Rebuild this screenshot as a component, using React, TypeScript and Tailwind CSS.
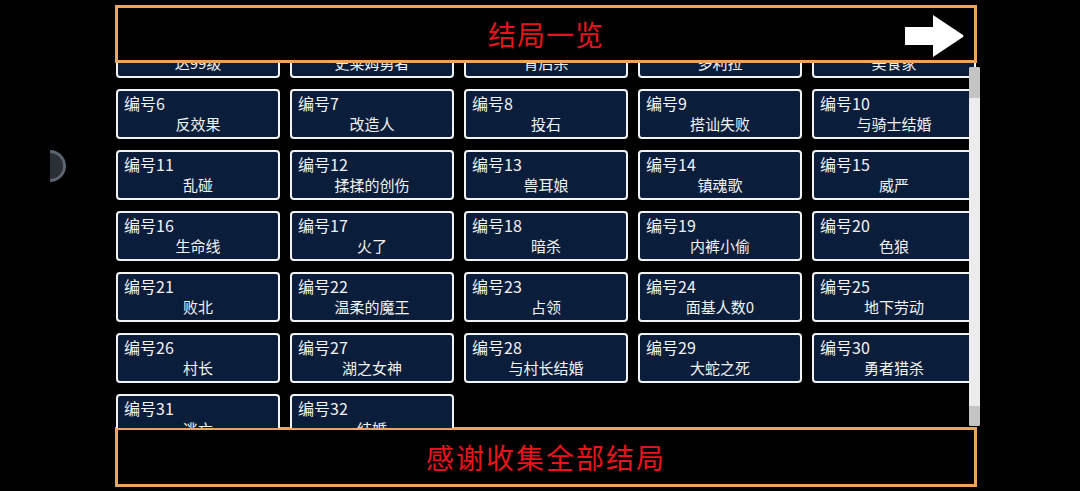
const endings: string[] = [
  "达99级",
  "史莱姆勇者",
  "背后杀",
  "多利拉",
  "美食家",
  "反效果",
  "改造人",
  "投石",
  "搭讪失败",
  "与骑士结婚",
  "乱碰",
  "揉揉的创伤",
  "兽耳娘",
  "镇魂歌",
  "威严",
  "生命线",
  "火了",
  "暗杀",
  "内裤小偷",
  "色狼",
  "败北",
  "温柔的魔王",
  "占领",
  "面基人数0",
  "地下劳动",
  "村长",
  "湖之女神",
  "与村长结婚",
  "大蛇之死",
  "勇者猎杀",
  "逃亡",
  "结婚",
];

const font = "font-['Noto_Sans_CJK_SC','Noto_Sans',sans-serif]";

function EndingCard({ no, title }: { no: number; title: string }) {
  return (
    <div className="h-[50px] w-[164px] rounded-[4px] border-2 border-[#f4f4f4] bg-[#0a1e3c] px-[6px] pt-px text-[#f2f2f2]">
      <div className="h-[22px] text-[16px] leading-[22px]">编号{no}</div>
      <div className="text-center text-[15px] leading-[20px]">{title}</div>
    </div>
  );
}

function NextArrow() {
  return (
    <svg width="60" height="44" viewBox="0 0 60 44" className="block">
      <rect x="0" y="13" width="30" height="18" fill="#fff" />
      <path d="M28 1 L58 21 Q59 22 58 23 L28 43 Z" fill="#fff" />
    </svg>
  );
}

export default function App() {
  return (
    <div className={`relative h-[491px] w-[1080px] overflow-hidden bg-black ${font}`}>
      {/* floating side handle */}
      <div className="absolute left-[50px] top-[150px] h-[32px] w-[17px] overflow-hidden">
        <div className="ml-[-16px] h-[32px] w-[32px] rounded-full border-[3px] border-[#5b6470] bg-[#2a2f36]" />
      </div>

      <div className="flex flex-col pl-[115px] pt-[5px]">
        <header className="relative z-10 flex h-[58px] w-[862px] items-center justify-center border-[3px] border-[#f0a45a] bg-black">
          <span className="text-[28px] tracking-[1px] text-[#e8141c]">结局一览</span>
          <div className="absolute right-[9px] top-[6px]">
            <NextArrow />
          </div>
        </header>

        <div className="relative h-[365px] w-[865px] overflow-hidden pl-px">
          <div className="mt-[-35px] grid w-[860px] grid-cols-5 gap-x-[10px] gap-y-[11px]">
            {endings.map((t, i) => (
              <EndingCard key={i} no={i + 1} title={t} />
            ))}
          </div>
          {/* scrollbar */}
          <div className="absolute right-0 top-[4px] flex h-[359px] w-[11px] flex-col rounded-[2px] bg-[#e6e6e6]">
            <div className="h-[31px] rounded-t-[2px] bg-[#c4c4c4]" />
            <div className="flex-1 bg-[#ececec]" />
            <div className="h-[20px] rounded-b-[2px] bg-[#c4c4c4]" />
          </div>
        </div>

        <footer className="mt-[-1px] flex h-[60px] w-[862px] items-center justify-center border-[3px] border-[#f0a45a] bg-black">
          <span className="text-[28px] tracking-[2px] text-[#e8141c]">感谢收集全部结局</span>
        </footer>
      </div>
    </div>
  );
}
